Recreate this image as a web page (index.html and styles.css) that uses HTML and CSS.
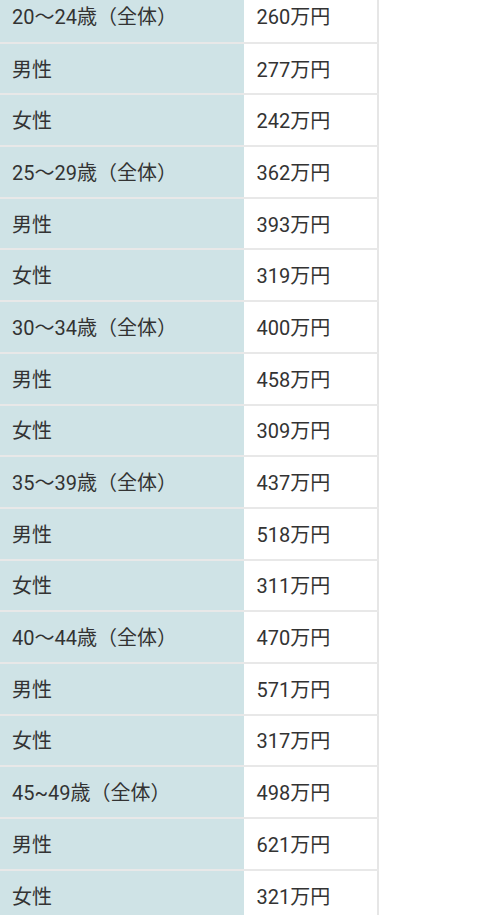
FILE: index.html
```html
<!DOCTYPE html>
<html lang="ja">
<head>
<meta charset="utf-8">
<link rel="stylesheet" href="styles.css">
</head>
<body>
<table class="salary">
<tbody>
<tr><th>20～24歳（全体）</th><td>260万円</td></tr>
<tr><th>男性</th><td>277万円</td></tr>
<tr><th>女性</th><td>242万円</td></tr>
<tr><th>25～29歳（全体）</th><td>362万円</td></tr>
<tr><th>男性</th><td>393万円</td></tr>
<tr><th>女性</th><td>319万円</td></tr>
<tr><th>30～34歳（全体）</th><td>400万円</td></tr>
<tr><th>男性</th><td>458万円</td></tr>
<tr><th>女性</th><td>309万円</td></tr>
<tr><th>35～39歳（全体）</th><td>437万円</td></tr>
<tr><th>男性</th><td>518万円</td></tr>
<tr><th>女性</th><td>311万円</td></tr>
<tr><th>40～44歳（全体）</th><td>470万円</td></tr>
<tr><th>男性</th><td>571万円</td></tr>
<tr><th>女性</th><td>317万円</td></tr>
<tr><th>45~49歳（全体）</th><td>498万円</td></tr>
<tr><th>男性</th><td>621万円</td></tr>
<tr><th>女性</th><td>321万円</td></tr>
</tbody>
</table>
</body>
</html>
```

FILE: styles.css
```css
html, body {
  margin: 0;
  padding: 0;
  background: #ffffff;
}
body {
  font-family: Roboto, "Noto Sans CJK JP", sans-serif;
  color: #333333;
  overflow: hidden;
}
.salary {
  border-collapse: collapse;
  width: 379px;
  margin-top: -9px;
  table-layout: fixed;
  border-right: 2px solid #e6e6e6;
}
.salary th,
.salary td {
  height: 51.7px;
  padding: 2px 0 0 12px;
  font-size: 20px;
  font-weight: 400;
  text-align: left;
  vertical-align: middle;
  border-bottom: 2px solid #e8e8e8;
  box-sizing: border-box;
  line-height: 1;
  white-space: nowrap;
}
.salary th {
  width: 244px;
  background: #cfe3e6;
  border-right: 1px solid #ffffff;
}
.salary td {
  background: #ffffff;
}
```
